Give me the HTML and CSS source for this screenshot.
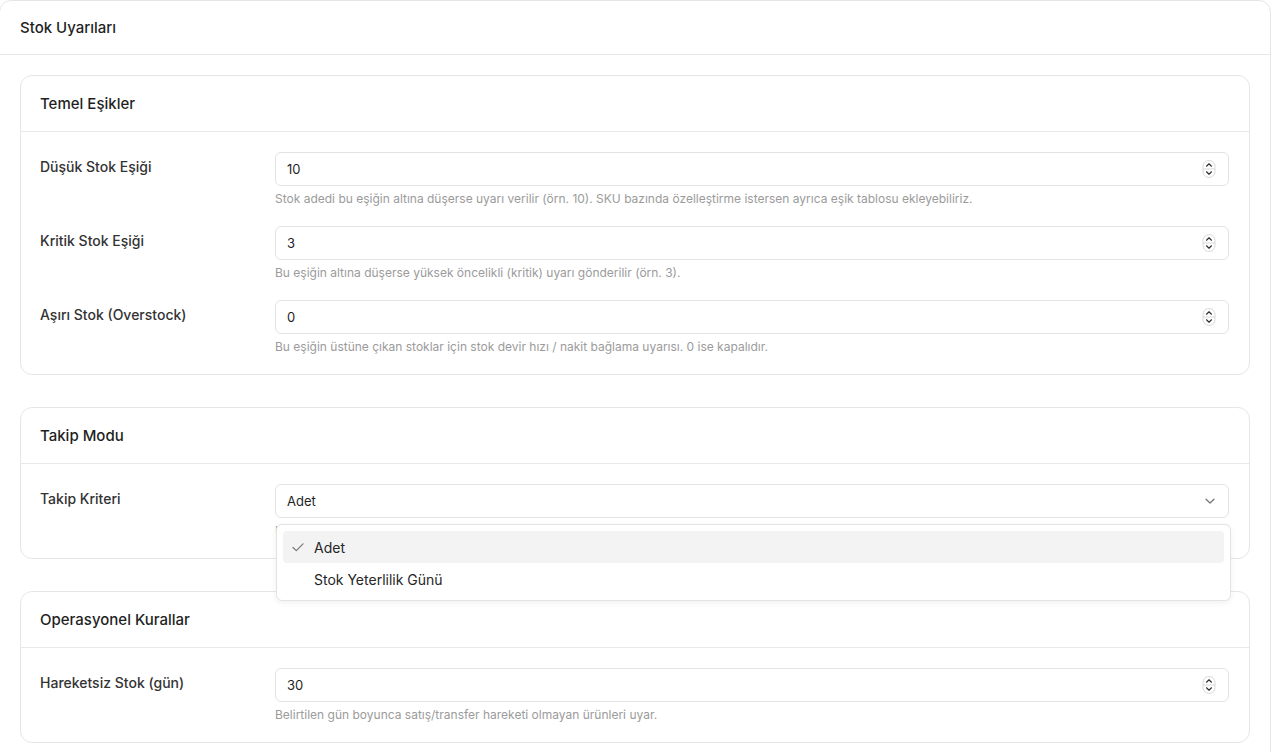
FILE: index.html
```html
<!DOCTYPE html>
<html lang="tr">
<head>
    <meta charset="UTF-8">
    <meta name="viewport" content="width=device-width, initial-scale=1.0">
    <link rel="stylesheet" href="styles.css">
    <title>Stok Uyarıları</title>
</head>
<body>
    <div class="panel">
        <div class="panel-head">Stok Uyarıları</div>
        <div class="panel-body">

            <section class="card">
                <div class="card-head">Temel Eşikler</div>
                <div class="card-body">
                    <div class="row">
                        <label class="label" for="lowStock">Düşük Stok Eşiği</label>
                        <div class="control">
                            <div class="field">
                                <input id="lowStock" type="text" inputmode="numeric" value="10">
                                <svg class="spin" width="14" height="20" viewBox="0 0 14 20"><rect x="1" y="1.5" width="12" height="17" rx="6" fill="#fff" stroke="#d9d9d9"/><line x1="1" y1="10" x2="13" y2="10" stroke="#d9d9d9"/><path d="M4.5 7.2 L7 4.8 L9.5 7.2 M4.5 12.8 L7 15.2 L9.5 12.8" fill="none" stroke="#333" stroke-width="1.2" stroke-linecap="round" stroke-linejoin="round"/></svg>
                            </div>
                            <p class="hint">Stok adedi bu eşiğin altına düşerse uyarı verilir (örn. 10). SKU bazında özelleştirme istersen ayrıca eşik tablosu ekleyebiliriz.</p>
                        </div>
                    </div>
                    <div class="row">
                        <label class="label" for="critStock">Kritik Stok Eşiği</label>
                        <div class="control">
                            <div class="field">
                                <input id="critStock" type="text" inputmode="numeric" value="3">
                                <svg class="spin" width="14" height="20" viewBox="0 0 14 20"><rect x="1" y="1.5" width="12" height="17" rx="6" fill="#fff" stroke="#d9d9d9"/><line x1="1" y1="10" x2="13" y2="10" stroke="#d9d9d9"/><path d="M4.5 7.2 L7 4.8 L9.5 7.2 M4.5 12.8 L7 15.2 L9.5 12.8" fill="none" stroke="#333" stroke-width="1.2" stroke-linecap="round" stroke-linejoin="round"/></svg>
                            </div>
                            <p class="hint">Bu eşiğin altına düşerse yüksek öncelikli (kritik) uyarı gönderilir (örn. 3).</p>
                        </div>
                    </div>
                    <div class="row">
                        <label class="label" for="overStock">Aşırı Stok (Overstock)</label>
                        <div class="control">
                            <div class="field">
                                <input id="overStock" type="text" inputmode="numeric" value="0">
                                <svg class="spin" width="14" height="20" viewBox="0 0 14 20"><rect x="1" y="1.5" width="12" height="17" rx="6" fill="#fff" stroke="#d9d9d9"/><line x1="1" y1="10" x2="13" y2="10" stroke="#d9d9d9"/><path d="M4.5 7.2 L7 4.8 L9.5 7.2 M4.5 12.8 L7 15.2 L9.5 12.8" fill="none" stroke="#333" stroke-width="1.2" stroke-linecap="round" stroke-linejoin="round"/></svg>
                            </div>
                            <p class="hint">Bu eşiğin üstüne çıkan stoklar için stok devir hızı / nakit bağlama uyarısı. 0 ise kapalıdır.</p>
                        </div>
                    </div>
                </div>
            </section>

            <section class="card card-open">
                <div class="card-head">Takip Modu</div>
                <div class="card-body">
                    <div class="row">
                        <label class="label">Takip Kriteri</label>
                        <div class="control">
                            <div class="select">
                                <div class="field">
                                    <span class="value">Adet</span>
                                    <svg class="chev" width="14" height="14" viewBox="0 0 14 14"><path d="M3 5.2 L7 9 L11 5.2" fill="none" stroke="#777" stroke-width="1.3" stroke-linecap="round" stroke-linejoin="round"/></svg>
                                </div>
                                <ul class="menu">
                                    <li class="option active">
                                        <svg class="check" width="14" height="14" viewBox="0 0 14 14"><path d="M2 7.5 L5.3 10.6 L12 3.8" fill="none" stroke="#777" stroke-width="1.2" stroke-linecap="round" stroke-linejoin="round"/></svg>
                                        Adet
                                    </li>
                                    <li class="option">Stok Yeterlilik Günü</li>
                                </ul>
                            </div>
                            <p class="hint">Uyarıların adet ya da stok yeterlilik gününe göre hesaplanmasını seçin.</p>
                        </div>
                    </div>
                </div>
            </section>

            <section class="card">
                <div class="card-head">Operasyonel Kurallar</div>
                <div class="card-body">
                    <div class="row">
                        <label class="label" for="idleStock">Hareketsiz Stok (gün)</label>
                        <div class="control">
                            <div class="field">
                                <input id="idleStock" type="text" inputmode="numeric" value="30">
                                <svg class="spin" width="14" height="20" viewBox="0 0 14 20"><rect x="1" y="1.5" width="12" height="17" rx="6" fill="#fff" stroke="#d9d9d9"/><line x1="1" y1="10" x2="13" y2="10" stroke="#d9d9d9"/><path d="M4.5 7.2 L7 4.8 L9.5 7.2 M4.5 12.8 L7 15.2 L9.5 12.8" fill="none" stroke="#333" stroke-width="1.2" stroke-linecap="round" stroke-linejoin="round"/></svg>
                            </div>
                            <p class="hint">Belirtilen gün boyunca satış/transfer hareketi olmayan ürünleri uyar.</p>
                        </div>
                    </div>
                </div>
            </section>

        </div>
    </div>
</body>
</html>
```

FILE: styles.css
```css
body {
    margin: 0;
    background: #fff;
    font-family: Inter, "Noto Sans", sans-serif;
    color: #1f1f1f;
}

.panel {
    width: 1272px;
    box-sizing: border-box;
    border: 1px solid #e6e6e6;
    border-radius: 12px;
    margin-left: -1px;
}

.panel-head {
    height: 53px;
    padding: 0 20px;
    display: flex;
    align-items: center;
    border-bottom: 1px solid #e8e8e8;
    font-size: 15px;
    font-weight: 500;
}

.panel-body {
    padding: 20px;
    display: flex;
    flex-direction: column;
    gap: 32px;
}

.card {
    border: 1px solid #e6e6e6;
    border-radius: 12px;
    background: #fff;
}

.card-head {
    height: 55px;
    padding: 0 19px;
    display: flex;
    align-items: center;
    border-bottom: 1px solid #e8e8e8;
    font-size: 15px;
    font-weight: 500;
}

.card-body {
    padding: 20px 20px 20px 19px;
    display: flex;
    flex-direction: column;
    gap: 20px;
}

.row {
    display: flex;
}

.label {
    width: 235px;
    flex-shrink: 0;
    padding-top: 6px;
    font-size: 14px;
    font-weight: 500;
    line-height: 18px;
    color: #333;
}

.control {
    flex: 1;
    position: relative;
}

.field {
    height: 34px;
    box-sizing: border-box;
    border: 1px solid #e3e3e3;
    border-radius: 6px;
    display: flex;
    align-items: center;
    padding: 0 11px;
    background: #fff;
}

.field input {
    flex: 1;
    border: 0;
    outline: none;
    padding: 0;
    font: inherit;
    font-size: 13px;
    color: #1f1f1f;
    background: transparent;
}

.field .value {
    flex: 1;
    font-size: 13px;
}

.spin {
    margin-right: 1px;
}

.hint {
    margin: 5px 0 0;
    font-size: 12px;
    line-height: 15px;
    color: #9b9b9b;
}

.select {
    position: relative;
}

.menu {
    position: absolute;
    top: 40px;
    left: 1px;
    right: -2px;
    z-index: 2;
    margin: 0;
    padding: 6px 6px 5px;
    list-style: none;
    background: #fff;
    border: 1px solid #e3e3e3;
    border-radius: 6px;
    box-shadow: 0 2px 6px rgba(0, 0, 0, 0.06);
}

.option {
    height: 32px;
    display: flex;
    align-items: center;
    padding-left: 31px;
    border-radius: 4px;
    font-size: 14px;
    color: #262626;
    position: relative;
}

.option.active {
    background: #f3f3f4;
}

.check {
    position: absolute;
    left: 8px;
    top: 9px;
}
```
